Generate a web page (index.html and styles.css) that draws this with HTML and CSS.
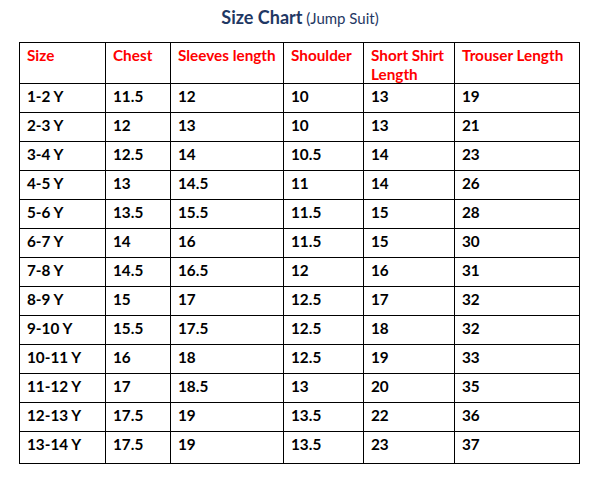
FILE: index.html
```html
<!DOCTYPE html>
<html>
<head>
<meta charset="utf-8">
<link rel="stylesheet" href="styles.css">
</head>
<body>
<div class="page">
  <h1 class="title"><span class="title-main">Size Chart</span><span class="title-sub"> (Jump Suit)</span></h1>
  <table class="chart">
    <colgroup>
      <col class="c1"><col class="c2"><col class="c3"><col class="c4"><col class="c5"><col class="c6">
    </colgroup>
    <thead>
      <tr><th>Size</th><th>Chest</th><th>Sleeves length</th><th>Shoulder</th><th>Short Shirt Length</th><th>Trouser Length</th></tr>
    </thead>
    <tbody>
      <tr><td>1-2 Y</td><td>11.5</td><td>12</td><td>10</td><td>13</td><td>19</td></tr>
      <tr><td>2-3 Y</td><td>12</td><td>13</td><td>10</td><td>13</td><td>21</td></tr>
      <tr><td>3-4 Y</td><td>12.5</td><td>14</td><td>10.5</td><td>14</td><td>23</td></tr>
      <tr><td>4-5 Y</td><td>13</td><td>14.5</td><td>11</td><td>14</td><td>26</td></tr>
      <tr><td>5-6 Y</td><td>13.5</td><td>15.5</td><td>11.5</td><td>15</td><td>28</td></tr>
      <tr><td>6-7 Y</td><td>14</td><td>16</td><td>11.5</td><td>15</td><td>30</td></tr>
      <tr><td>7-8 Y</td><td>14.5</td><td>16.5</td><td>12</td><td>16</td><td>31</td></tr>
      <tr><td>8-9 Y</td><td>15</td><td>17</td><td>12.5</td><td>17</td><td>32</td></tr>
      <tr><td>9-10 Y</td><td>15.5</td><td>17.5</td><td>12.5</td><td>18</td><td>32</td></tr>
      <tr><td>10-11 Y</td><td>16</td><td>18</td><td>12.5</td><td>19</td><td>33</td></tr>
      <tr><td>11-12 Y</td><td>17</td><td>18.5</td><td>13</td><td>20</td><td>35</td></tr>
      <tr><td>12-13 Y</td><td>17.5</td><td>19</td><td>13.5</td><td>22</td><td>36</td></tr>
      <tr class="last"><td>13-14 Y</td><td>17.5</td><td>19</td><td>13.5</td><td>23</td><td>37</td></tr>
    </tbody>
  </table>
</div>
</body>
</html>
```
FILE: styles.css
```css
html, body {
  margin: 0;
  padding: 0;
  background: #ffffff;
}
.page {
  width: 606px;
  font-family: Lato, "Liberation Sans", sans-serif;
  color: #000000;
}
.title {
  margin: 0;
  padding-top: 2px;
  height: 42px;
  box-sizing: border-box;
  text-align: center;
  font-weight: normal;
  line-height: 20px;
  color: #1f3864;
  padding-right: 6px;
}
.title-main {
  font-size: 18px;
  font-weight: 700;
}
.title-sub {
  font-size: 15px;
  font-weight: 400;
}
.chart {
  margin-left: 19px;
  border-collapse: collapse;
  table-layout: fixed;
  width: 560px;
}
.c1 { width: 86px; }
.c2 { width: 65px; }
.c3 { width: 113px; }
.c4 { width: 80px; }
.c5 { width: 91px; }
.c6 { width: 125px; }
.chart th, .chart td {
  border: 1px solid #000000;
  text-align: left;
  vertical-align: top;
  font-size: 15.3px;
  font-weight: 700;
  line-height: 19px;
  padding: 3px 2px 6px 7px;
  height: 19px;
}
.chart th {
  color: #ff0000;
  line-height: 18.5px;
  padding-top: 3px;
  height: 37px;
  padding-bottom: 0;
}
.chart tr.last td {
  height: 22px;
}
```
